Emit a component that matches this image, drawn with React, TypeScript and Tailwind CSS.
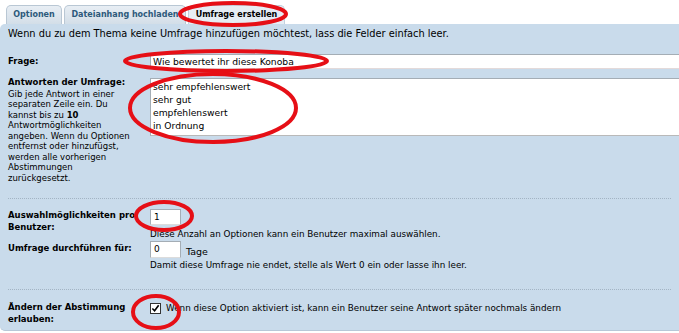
const answers = ['sehr empfehlenswert', 'sehr gut', 'empfehlenswert', 'in Ordnung', 'weniger in Ordnung']

function Tab({ label, active, width }: { label: string; active?: boolean; width: string }) {
  return (
    <div
      className={`flex h-[19px] items-center justify-center rounded-t-[5px] border border-b-0 text-[8px] font-bold ${width} ${
        active
          ? 'border-[#c3d2df] bg-[#e6edf4] text-black'
          : 'border-[#b9c7d4] bg-gradient-to-b from-[#e8eef4] to-[#d3dee8] text-[#2d5a7b]'
      }`}
    >
      {label}
    </div>
  )
}

function Ellipse({ cx, cy, rx, ry }: { cx: number; cy: number; rx: number; ry: number }) {
  return <ellipse cx={cx} cy={cy} rx={rx} ry={ry} fill="none" stroke="#e60f16" strokeWidth={4} />
}

export default function App() {
  return (
    <div className="relative h-[333px] w-[679px] overflow-hidden bg-white font-['DejaVu_Sans',sans-serif] text-black">
      <div className="flex h-[24px] items-end gap-[2px] pl-[6px]">
        <Tab label="Optionen" width="w-[56px]" />
        <Tab label="Dateianhang hochladen" width="w-[122px]" />
        <Tab label="Umfrage erstellen" width="w-[97px]" active />
      </div>

      <div className="h-[307px] rounded-l-[5px] border-b border-[#b7c8d8] bg-[#c9dbeb]">
        <p className="px-[8px] pt-[3px] text-[9.8px] leading-[14px]">
          Wenn du zu dem Thema keine Umfrage hinzufügen möchtest, lass die Felder einfach leer.
        </p>

        <div className="mt-[13px] flex items-center">
          <div className="w-[150px] shrink-0 pl-[8px] text-[8.5px] font-bold">Frage:</div>
          <div className="h-[15px] w-[560px] shrink-0 border border-[#a4adb5] border-b-[#e3dada] bg-white pl-[2px] text-[9.2px] leading-[13px]">
            Wie bewertet ihr diese Konoba
          </div>
        </div>

        <div className="mt-[9px] flex items-start">
          <div className="-mt-[1px] w-[150px] shrink-0 pl-[8px] text-[8.5px] leading-[10.5px]">
            <div className="mb-[1px] font-bold">Antworten der Umfrage:</div>
            Gib jede Antwort in einer
            <br />
            separaten Zeile ein. Du
            <br />
            kannst bis zu <b>10</b>
            <br />
            Antwortmöglichkeiten
            <br />
            angeben. Wenn du Optionen
            <br />
            entfernst oder hinzufügst,
            <br />
            werden alle vorherigen
            <br />
            Abstimmungen
            <br />
            zurückgesetzt.
          </div>
          <div className="h-[58px] w-[560px] shrink-0 overflow-hidden border border-[#a4adb5] border-b-[#b9b9b9] bg-white pl-[2px] text-[9.2px] leading-[13px]">
            <div className="mt-[1px]">
              {answers.map((a) => (
                <div key={a}>{a}</div>
              ))}
            </div>
          </div>
        </div>

        <div className="mx-[8px] mt-[15px] border-t border-dotted border-[#a3b4c4]" />

        <div className="mt-[10px] flex items-start">
          <div className="w-[150px] shrink-0 pl-[8px] text-[8.5px] font-bold leading-[12px]">
            Auswahlmöglichkeiten pro Benutzer:
          </div>
          <div className="text-[8.8px]">
            <div className="h-[16px] w-[31px] border border-[#a4adb5] border-b-[#dcdcdc] bg-white pl-[3px] text-[9px] leading-[14px]">
              1
            </div>
            <div className="mt-[3px] leading-[12px]">Diese Anzahl an Optionen kann ein Benutzer maximal auswählen.</div>
          </div>
        </div>

        <div className="mt-[1px] flex items-start">
          <div className="mt-[1px] w-[150px] shrink-0 pl-[8px] text-[8.5px] font-bold leading-[12px]">
            Umfrage durchführen für:
          </div>
          <div className="text-[8.8px]">
            <div className="flex items-end gap-[5px]">
              <div className="h-[17px] w-[31px] border border-[#a4adb5] border-b-[#dcdcdc] bg-white pl-[3px] text-[9px] leading-[15px]">
                0
              </div>
              <span className="text-[9.5px] leading-[12px]">Tage</span>
            </div>
            <div className="mt-[1px] leading-[12px]">
              Damit diese Umfrage nie endet, stelle als Wert 0 ein oder lasse ihn leer.
            </div>
          </div>
        </div>

        <div className="mx-[8px] mt-[18px] border-t border-dotted border-[#a3b4c4]" />

        <div className="mt-[12px] flex items-start">
          <div className="w-[150px] shrink-0 pl-[8px] text-[8.5px] font-bold leading-[11.5px]">
            Ändern der Abstimmung erlauben:
          </div>
          <div className="flex items-center gap-[5px] text-[8.8px] leading-[12px]">
            <span className="flex h-[11px] w-[11px] shrink-0 items-center justify-center border border-[#333] bg-white">
              <svg viewBox="0 0 10 10" className="h-[9px] w-[9px]">
                <path d="M1.5 5 L4 7.5 L8.5 1.5" fill="none" stroke="#000" strokeWidth={1.8} />
              </svg>
            </span>
            Wenn diese Option aktiviert ist, kann ein Benutzer seine Antwort später nochmals ändern
          </div>
        </div>
      </div>

      <svg className="pointer-events-none absolute left-0 top-0" width={679} height={333}>
        <Ellipse cx={233} cy={14} rx={53} ry={11} />
        <Ellipse cx={226} cy={61} rx={101} ry={10} />
        <Ellipse cx={213} cy={108} rx={83} ry={34} />
        <Ellipse cx={164} cy={216} rx={28} ry={14} />
        <Ellipse cx={156} cy={312} rx={23} ry={16} />
      </svg>
    </div>
  )
}
